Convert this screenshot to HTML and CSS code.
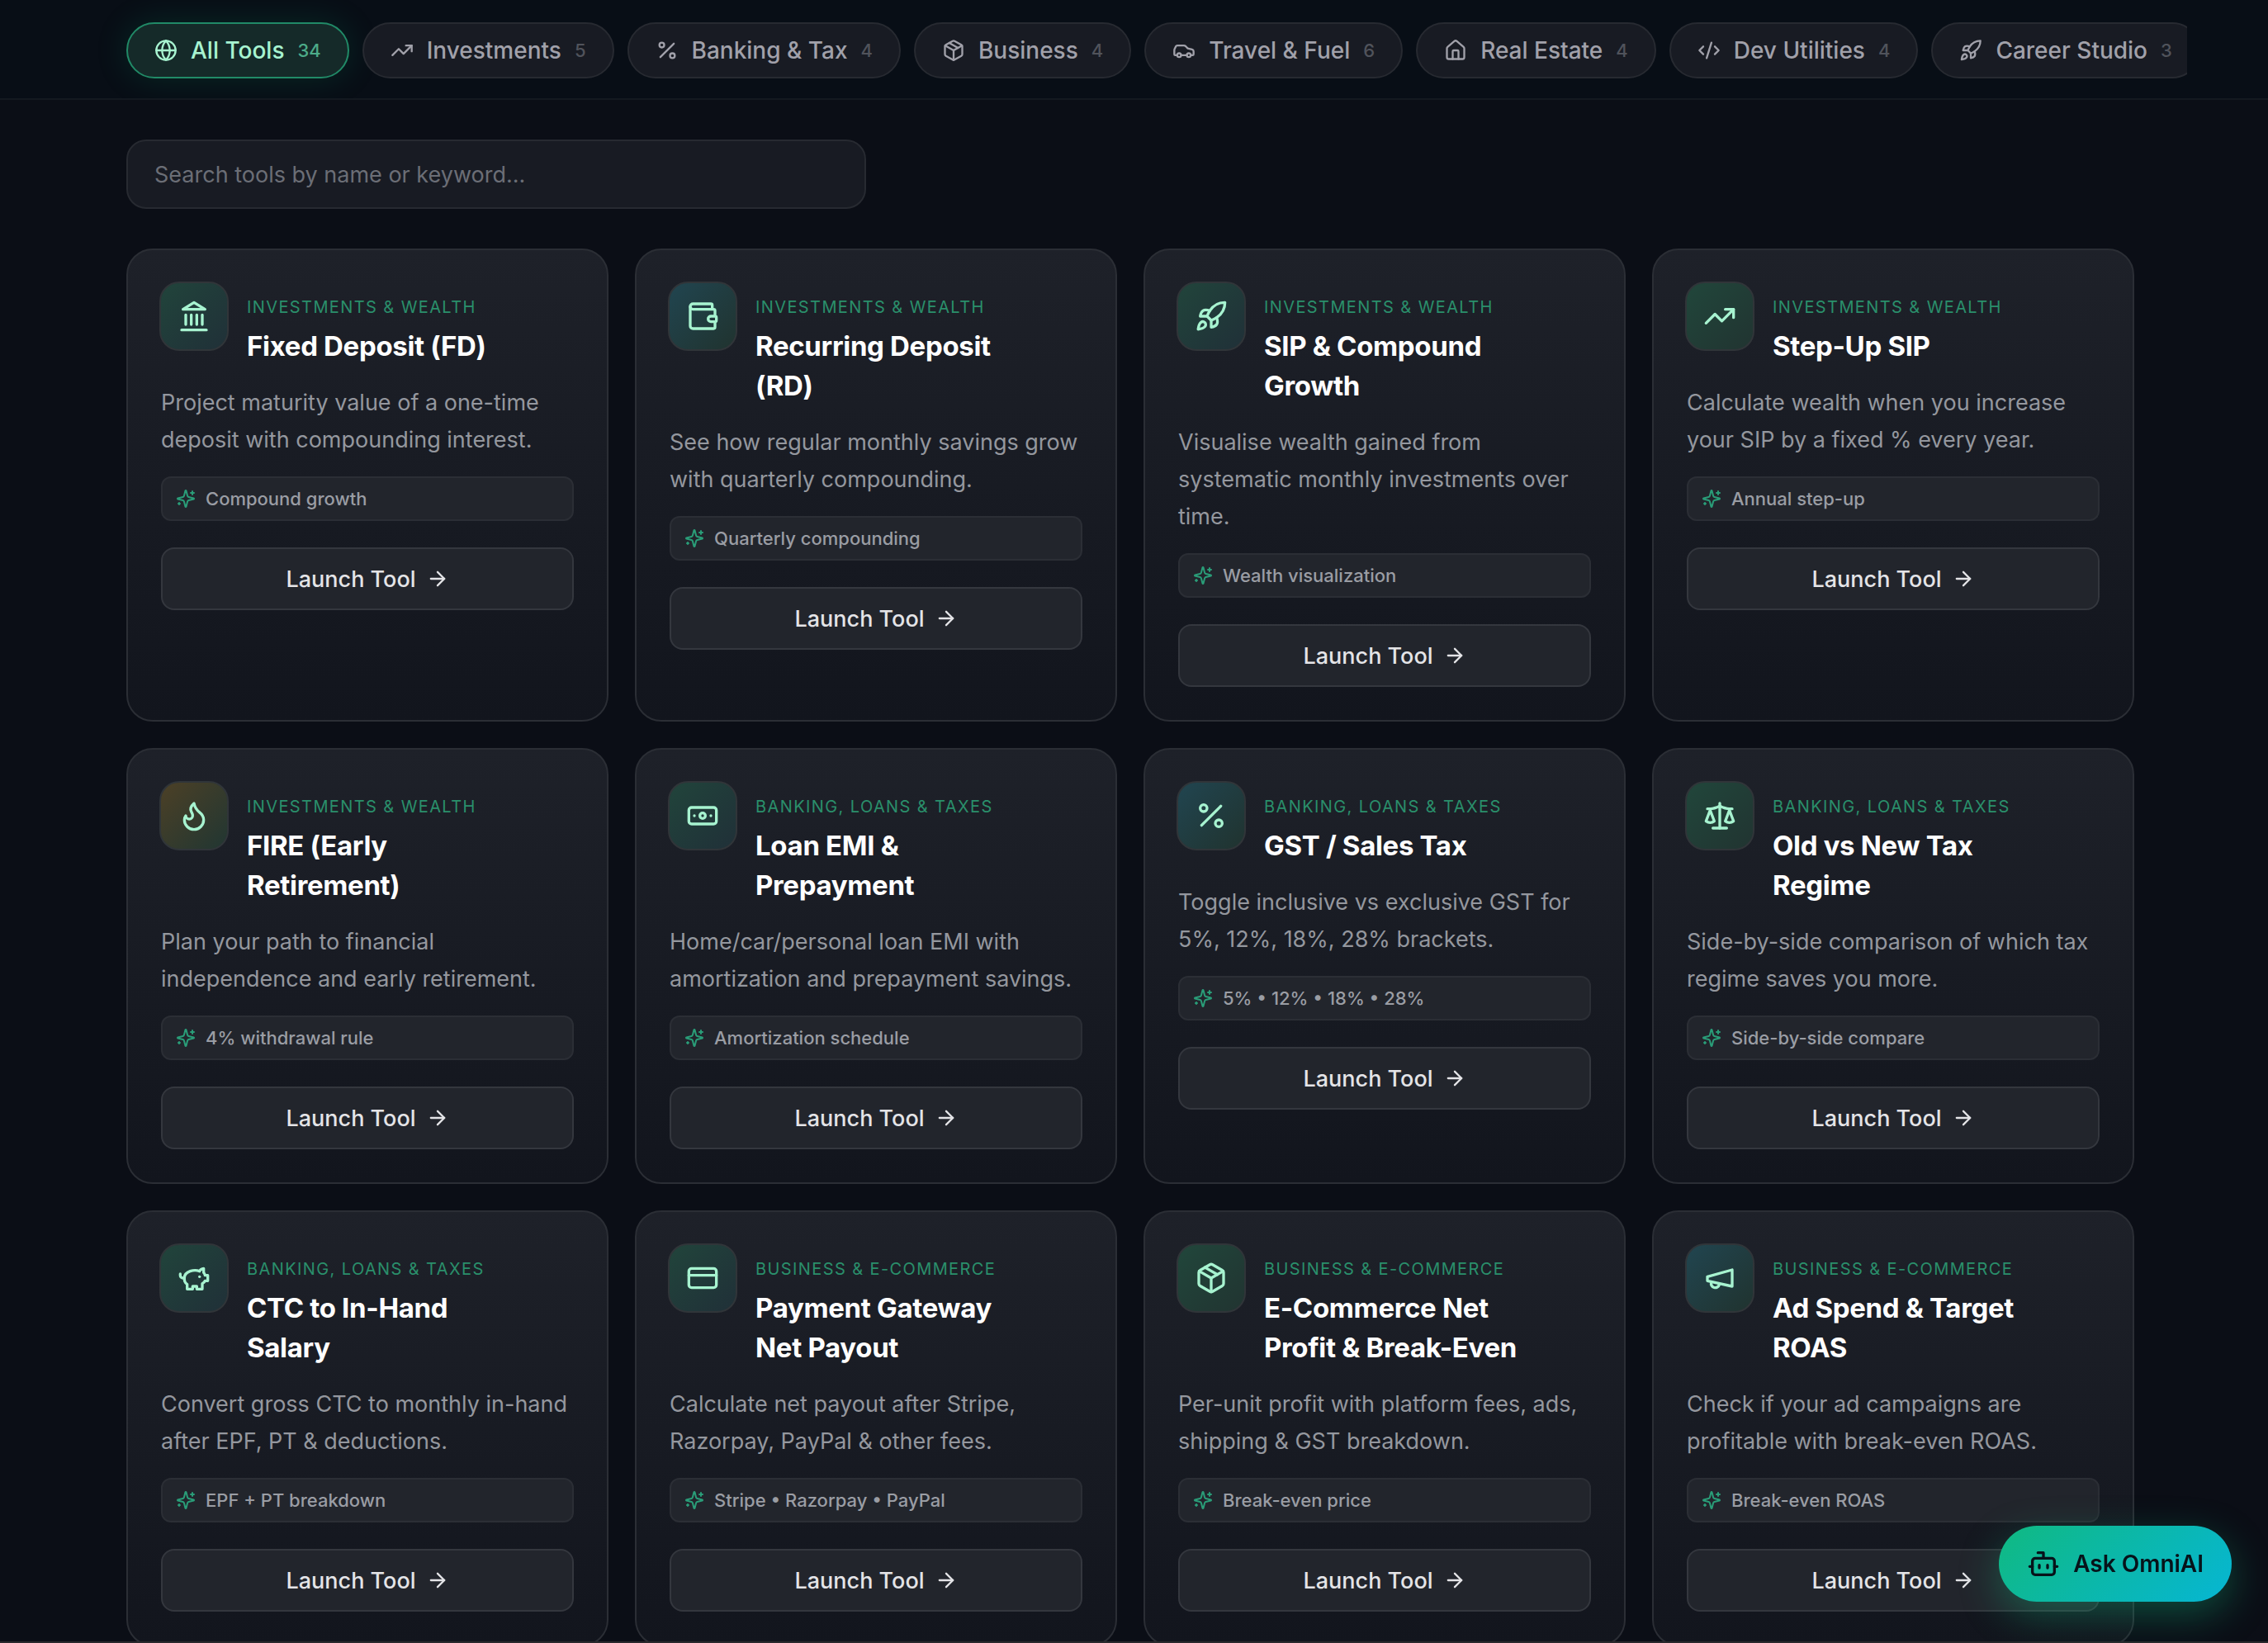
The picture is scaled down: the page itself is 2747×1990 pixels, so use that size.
FILE: index.html
```html
<!DOCTYPE html>
<html lang="en">
<head>
  <meta charset="UTF-8">
  <meta name="viewport" content="width=device-width, initial-scale=1.0">
  <title>OmniTools</title>
  <link rel="stylesheet" href="styles.css">
</head>
<body>
  <!-- icon sprite -->
  <svg class="sprite" aria-hidden="true">
    <symbol id="globe" viewBox="0 0 24 24"><circle cx="12" cy="12" r="10"/><path d="M12 2a14.500 14.500 0 0 0 0 20 14.500 14.500 0 0 0 0-20"/><path d="M2 12h20"/></symbol>
    <symbol id="trend" viewBox="0 0 24 24"><path d="M22 7l-8.500 8.500-5-5L2 17"/><path d="M16 7h6v6"/></symbol>
    <symbol id="percent" viewBox="0 0 24 24"><path d="M19 5 5 19"/><circle cx="6.500" cy="6.500" r="2.500"/><circle cx="17.500" cy="17.500" r="2.500"/></symbol>
    <symbol id="package" viewBox="0 0 24 24"><path d="m7.500 4.270 9 5.150"/><path d="M21 8a2 2 0 0 0-1-1.730l-7-4a2 2 0 0 0-2 0l-7 4A2 2 0 0 0 3 8v8a2 2 0 0 0 1 1.730l7 4a2 2 0 0 0 2 0l7-4A2 2 0 0 0 21 16Z"/><path d="m3.300 7 8.700 5 8.700-5"/><path d="M12 22V12"/></symbol>
    <symbol id="car" viewBox="0 0 24 24"><path d="M19 17h2c.6 0 1-.4 1-1v-3c0-.9-.7-1.700-1.500-1.900C18.700 10.600 16 10 16 10s-1.300-1.400-2.200-2.300c-.5-.4-1.100-.7-1.800-.7H5c-.6 0-1.100.4-1.400.9l-1.400 2.900A3.700 3.700 0 0 0 2 12v4c0 .6.4 1 1 1h2"/><circle cx="7" cy="17" r="2"/><path d="M9 17h6"/><circle cx="17" cy="17" r="2"/></symbol>
    <symbol id="house" viewBox="0 0 24 24"><path d="M15 21v-8a1 1 0 0 0-1-1h-4a1 1 0 0 0-1 1v8"/><path d="M3 10a2 2 0 0 1 .709-1.528l7-5.999a2 2 0 0 1 2.582 0l7 5.999A2 2 0 0 1 21 10v9a2 2 0 0 1-2 2H5a2 2 0 0 1-2-2z"/></symbol>
    <symbol id="code" viewBox="0 0 24 24"><path d="m18 16 4-4-4-4"/><path d="m6 8-4 4 4 4"/><path d="m14.500 4-5 16"/></symbol>
    <symbol id="rocket" viewBox="0 0 24 24"><path d="M4.500 16.500c-1.500 1.260-2 5-2 5s3.740-.5 5-2c.71-.84.7-2.130-.09-2.910a2.180 2.180 0 0 0-2.910-.09z"/><path d="m12 15-3-3a22 22 0 0 1 2-3.950A12.880 12.880 0 0 1 22 2c0 2.720-.78 7.500-6 11a22.350 22.350 0 0 1-4 2z"/><path d="M9 12H4s.55-3.030 2-4c1.620-1.080 5 0 5 0"/><path d="M12 15v5s3.030-.55 4-2c1.080-1.620 0-5 0-5"/></symbol>
    <symbol id="bank" viewBox="0 0 24 24"><path d="M3 22h18M6 18v-7M10 18v-7M14 18v-7M18 18v-7"/><path d="M12 2l8 5H4z"/></symbol>
    <symbol id="wallet" viewBox="0 0 24 24"><path d="M19 7V4a1 1 0 0 0-1-1H5a2 2 0 0 0 0 4h15a1 1 0 0 1 1 1v4h-3a2 2 0 0 0 0 4h3a1 1 0 0 0 1-1v-2a1 1 0 0 0-1-1"/><path d="M3 5v14a2 2 0 0 0 2 2h15a1 1 0 0 0 1-1v-4"/></symbol>
    <symbol id="flame" viewBox="0 0 24 24"><path d="M8.500 14.500A2.500 2.500 0 0 0 11 12c0-1.380-.5-2-1-3-1.072-2.143-.224-4.054 2-6 .5 2.500 2 4.900 4 6.500 2 1.600 3 3.500 3 5.500a7 7 0 1 1-14 0c0-1.153.433-2.294 1-3a2.500 2.500 0 0 0 2.500 2.500z"/></symbol>
    <symbol id="banknote" viewBox="0 0 24 24"><rect x="2" y="6" width="20" height="12" rx="2"/><circle cx="12" cy="12" r="2"/><path d="M6 12h.01M18 12h.01"/></symbol>
    <symbol id="scale" viewBox="0 0 24 24"><path d="m16 16 3-8 3 8c-.87.65-1.920 1-3 1s-2.130-.35-3-1Z"/><path d="m2 16 3-8 3 8c-.87.65-1.920 1-3 1s-2.130-.35-3-1Z"/><path d="M7 21h10"/><path d="M12 3v18"/><path d="M3 7h2c2 0 5-1 7-2 2 1 5 2 7 2h2"/></symbol>
    <symbol id="piggy" viewBox="0 0 24 24"><path d="M19 5c-1.500 0-2.800 1.400-3 2-3.500-1.500-11-.3-11 5 0 1.800 0 3 2 4.500V20h4v-2h3v2h4v-4c1-.5 1.700-1 2-2h2v-4h-2c0-1-.5-1.500-1-2V5z"/><path d="M2 9v1c0 1.100.9 2 2 2h1"/><path d="M16 11h.01"/></symbol>
    <symbol id="card" viewBox="0 0 24 24"><rect x="2" y="5" width="20" height="14" rx="2"/><path d="M2 10h20"/></symbol>
    <symbol id="megaphone" viewBox="0 0 24 24"><path d="m3 11 18-5v12L3 14v-3z"/><path d="M11.600 16.800a3 3 0 1 1-5.800-1.600"/></symbol>
    <symbol id="sparkles" viewBox="0 0 24 24"><path d="M9.937 15.500A2 2 0 0 0 8.500 14.063l-6.135-1.582a.5.5 0 0 1 0-.962L8.500 9.936A2 2 0 0 0 9.937 8.500l1.582-6.135a.5.5 0 0 1 .963 0L14.063 8.500A2 2 0 0 0 15.500 9.937l6.135 1.581a.5.5 0 0 1 0 .964L15.500 14.063a2 2 0 0 0-1.437 1.437l-1.582 6.135a.5.5 0 0 1-.963 0z"/><path d="M20 3v4M22 5h-4M4 17v2M5 18H3"/></symbol>
    <symbol id="arrow" viewBox="0 0 24 24"><path d="M5 12h14"/><path d="m12 5 7 7-7 7"/></symbol>
    <symbol id="bot" viewBox="0 0 24 24"><path d="M12 8V4H8"/><rect x="4" y="8" width="16" height="12" rx="2"/><path d="M2 14h2M20 14h2M15 13v2M9 13v2"/></symbol>
  </svg>

  <header class="topbar">
    <nav class="tabs" aria-label="Categories">
      <button class="tab active"><svg><use href="#globe"/></svg>All Tools<span class="count">34</span></button>
      <button class="tab"><svg><use href="#trend"/></svg>Investments<span class="count">5</span></button>
      <button class="tab"><svg><use href="#percent"/></svg>Banking &amp; Tax<span class="count">4</span></button>
      <button class="tab"><svg><use href="#package"/></svg>Business<span class="count">4</span></button>
      <button class="tab"><svg><use href="#car"/></svg>Travel &amp; Fuel<span class="count">6</span></button>
      <button class="tab"><svg><use href="#house"/></svg>Real Estate<span class="count">4</span></button>
      <button class="tab"><svg><use href="#code"/></svg>Dev Utilities<span class="count">4</span></button>
      <button class="tab"><svg><use href="#rocket"/></svg>Career Studio<span class="count">3</span></button>
    </nav>
  </header>

  <main class="content">
    <input class="search" type="search" aria-label="Search tools" placeholder="Search tools by name or keyword...">

    <div class="grid">
      <article class="tool">
        <div class="head">
          <div class="icon green-blue"><svg><use href="#bank"/></svg></div>
          <div class="titles">
            <p class="category">Investments &amp; Wealth</p>
            <h2>Fixed Deposit (FD)</h2>
          </div>
        </div>
        <p class="desc">Project maturity value of a one-time deposit with compounding interest.</p>
        <div class="chip"><svg><use href="#sparkles"/></svg>Compound growth</div>
        <button class="launch">Launch Tool<svg><use href="#arrow"/></svg></button>
      </article>

      <article class="tool">
        <div class="head">
          <div class="icon cyan"><svg><use href="#wallet"/></svg></div>
          <div class="titles">
            <p class="category">Investments &amp; Wealth</p>
            <h2>Recurring Deposit (RD)</h2>
          </div>
        </div>
        <p class="desc">See how regular monthly savings grow with quarterly compounding.</p>
        <div class="chip"><svg><use href="#sparkles"/></svg>Quarterly compounding</div>
        <button class="launch">Launch Tool<svg><use href="#arrow"/></svg></button>
      </article>

      <article class="tool">
        <div class="head">
          <div class="icon green-blue"><svg><use href="#rocket"/></svg></div>
          <div class="titles">
            <p class="category">Investments &amp; Wealth</p>
            <h2>SIP &amp; Compound Growth</h2>
          </div>
        </div>
        <p class="desc">Visualise wealth gained from systematic monthly investments over time.</p>
        <div class="chip"><svg><use href="#sparkles"/></svg>Wealth visualization</div>
        <button class="launch">Launch Tool<svg><use href="#arrow"/></svg></button>
      </article>

      <article class="tool">
        <div class="head">
          <div class="icon green"><svg><use href="#trend"/></svg></div>
          <div class="titles">
            <p class="category">Investments &amp; Wealth</p>
            <h2>Step-Up SIP</h2>
          </div>
        </div>
        <p class="desc">Calculate wealth when you increase your SIP by a fixed % every year.</p>
        <div class="chip"><svg><use href="#sparkles"/></svg>Annual step-up</div>
        <button class="launch">Launch Tool<svg><use href="#arrow"/></svg></button>
      </article>

      <article class="tool">
        <div class="head">
          <div class="icon amber"><svg><use href="#flame"/></svg></div>
          <div class="titles">
            <p class="category">Investments &amp; Wealth</p>
            <h2>FIRE (Early Retirement)</h2>
          </div>
        </div>
        <p class="desc">Plan your path to financial independence and early retirement.</p>
        <div class="chip"><svg><use href="#sparkles"/></svg>4% withdrawal rule</div>
        <button class="launch">Launch Tool<svg><use href="#arrow"/></svg></button>
      </article>

      <article class="tool">
        <div class="head">
          <div class="icon green-blue"><svg><use href="#banknote"/></svg></div>
          <div class="titles">
            <p class="category">Banking, Loans &amp; Taxes</p>
            <h2>Loan EMI &amp; Prepayment</h2>
          </div>
        </div>
        <p class="desc">Home/car/personal loan EMI with amortization and prepayment savings.</p>
        <div class="chip"><svg><use href="#sparkles"/></svg>Amortization schedule</div>
        <button class="launch">Launch Tool<svg><use href="#arrow"/></svg></button>
      </article>

      <article class="tool">
        <div class="head">
          <div class="icon cyan"><svg><use href="#percent"/></svg></div>
          <div class="titles">
            <p class="category">Banking, Loans &amp; Taxes</p>
            <h2>GST / Sales Tax</h2>
          </div>
        </div>
        <p class="desc">Toggle inclusive vs exclusive GST for 5%, 12%, 18%, 28% brackets.</p>
        <div class="chip"><svg><use href="#sparkles"/></svg>5% • 12% • 18% • 28%</div>
        <button class="launch">Launch Tool<svg><use href="#arrow"/></svg></button>
      </article>

      <article class="tool">
        <div class="head">
          <div class="icon green"><svg><use href="#scale"/></svg></div>
          <div class="titles">
            <p class="category">Banking, Loans &amp; Taxes</p>
            <h2>Old vs New Tax Regime</h2>
          </div>
        </div>
        <p class="desc">Side-by-side comparison of which tax regime saves you more.</p>
        <div class="chip"><svg><use href="#sparkles"/></svg>Side-by-side compare</div>
        <button class="launch">Launch Tool<svg><use href="#arrow"/></svg></button>
      </article>

      <article class="tool">
        <div class="head">
          <div class="icon green-blue"><svg><use href="#piggy"/></svg></div>
          <div class="titles">
            <p class="category">Banking, Loans &amp; Taxes</p>
            <h2>CTC to In-Hand Salary</h2>
          </div>
        </div>
        <p class="desc">Convert gross CTC to monthly in-hand after EPF, PT &amp; deductions.</p>
        <div class="chip"><svg><use href="#sparkles"/></svg>EPF + PT breakdown</div>
        <button class="launch">Launch Tool<svg><use href="#arrow"/></svg></button>
      </article>

      <article class="tool">
        <div class="head">
          <div class="icon green-blue"><svg><use href="#card"/></svg></div>
          <div class="titles">
            <p class="category">Business &amp; E-Commerce</p>
            <h2>Payment Gateway Net Payout</h2>
          </div>
        </div>
        <p class="desc">Calculate net payout after Stripe, Razorpay, PayPal &amp; other fees.</p>
        <div class="chip"><svg><use href="#sparkles"/></svg>Stripe • Razorpay • PayPal</div>
        <button class="launch">Launch Tool<svg><use href="#arrow"/></svg></button>
      </article>

      <article class="tool">
        <div class="head">
          <div class="icon green"><svg><use href="#package"/></svg></div>
          <div class="titles">
            <p class="category">Business &amp; E-Commerce</p>
            <h2>E-Commerce Net Profit &amp; Break-Even</h2>
          </div>
        </div>
        <p class="desc">Per-unit profit with platform fees, ads, shipping &amp; GST breakdown.</p>
        <div class="chip"><svg><use href="#sparkles"/></svg>Break-even price</div>
        <button class="launch">Launch Tool<svg><use href="#arrow"/></svg></button>
      </article>

      <article class="tool">
        <div class="head">
          <div class="icon cyan"><svg><use href="#megaphone"/></svg></div>
          <div class="titles">
            <p class="category">Business &amp; E-Commerce</p>
            <h2>Ad Spend &amp; Target ROAS</h2>
          </div>
        </div>
        <p class="desc">Check if your ad campaigns are profitable with break-even ROAS.</p>
        <div class="chip"><svg><use href="#sparkles"/></svg>Break-even ROAS</div>
        <button class="launch">Launch Tool<svg><use href="#arrow"/></svg></button>
      </article>
    </div>
  </main>

  <button class="ask"><svg><use href="#bot"/></svg>Ask OmniAI</button>
</body>
</html>
```
FILE: styles.css
```css
* {
  box-sizing: border-box;
  margin: 0;
}
body {
  height: 100vh;
  overflow: hidden;
  padding-right: 9px;
  border-bottom: 2px solid #29282c;
  background: #0b0e16;
  color: #e4e4e7;
  font-family: Inter, "Liberation Sans", sans-serif;
  font-size: 27px;
}
button {
  font: inherit;
  cursor: pointer;
}
svg {
  flex: none;
  fill: none;
  stroke: currentColor;
  stroke-width: 2;
  stroke-linecap: round;
  stroke-linejoin: round;
}
.sprite {
  display: none;
}

/* category bar */
.topbar {
  margin-right: -9px;
  padding-right: 9px;
  background: #080e16;
  border-bottom: 2px solid #131920;
}
.tabs {
  display: flex;
  gap: 16px;
  max-width: 2560px;
  margin: 0 auto;
  padding: 27px 0 24px 64px;
  overflow: hidden;
}
.tab {
  display: flex;
  flex: none;
  align-items: center;
  gap: 16px;
  height: 68px;
  padding: 0 32px;
  border: 2px solid #272a31;
  border-radius: 34px;
  background: #181b23;
  color: #a1a1aa;
  font-size: 28px;
  font-weight: 500;
}
.tab svg {
  width: 28px;
  height: 28px;
}
.count {
  color: #50535b;
  font-size: 22px;
}
.tab.active {
  border-color: #218a67;
  background: #152a29;
  color: #a7f3d0;
  box-shadow: 0 0 40px rgba(16, 185, 129, 0.15);
}
.active .count {
  color: #4cab88;
}

.content {
  max-width: 2560px;
  margin: 0 auto;
  padding: 48px 64px;
}
.search {
  display: block;
  width: 100%;
  max-width: 896px;
  height: 84px;
  margin-bottom: 48px;
  padding: 0 32px;
  border: 2px solid #272a31;
  border-radius: 24px;
  background: #181b23;
  color: #e4e4e7;
  font: inherit;
}
.search::placeholder {
  color: #6b6e76;
}

/* tool cards */
.grid {
  display: grid;
  grid-template-columns: repeat(4, 1fr);
  gap: 32px;
}
.tool {
  padding: 40px;
  border: 2px solid #2b2e35;
  border-radius: 32px;
  background: linear-gradient(#1e2129, #12151d);
}
.head {
  display: flex;
  align-items: flex-start;
  gap: 22px;
  margin-bottom: 22px;
}
.icon {
  display: flex;
  flex: none;
  align-items: center;
  justify-content: center;
  width: 84px;
  height: 84px;
  margin: -2px 0 -2px -2px;
  border: 2px solid #303539;
  border-radius: 24px;
  color: #a7f3d0;
}
.icon svg {
  width: 40px;
  height: 40px;
}
.green-blue { background: linear-gradient(135deg, #21443b, #203038); }
.green { background: linear-gradient(135deg, #21463b, #213431); }
.cyan { background: linear-gradient(135deg, #214550, #20332f); }
.amber { background: linear-gradient(135deg, #4c4026, #213632); }
.titles {
  padding-top: 13px;
}
.category {
  margin-bottom: 7px;
  color: #2a8f6b;
  font-size: 20px;
  line-height: 32px;
  letter-spacing: 0.07em;
  text-transform: uppercase;
}
h2 {
  color: #fff;
  font-size: 33px;
  font-weight: 700;
  line-height: 48px;
  letter-spacing: -0.01em;
  max-width: 320px;
}
.desc {
  margin-bottom: 22px;
  color: #94979e;
  line-height: 45px;
}
.chip {
  display: flex;
  align-items: center;
  gap: 12px;
  height: 54px;
  margin-bottom: 32px;
  padding: 0 16px;
  border: 2px solid #2b2e35;
  border-radius: 12px;
  background: #22252c;
  color: #9a9da4;
  font-size: 22px;
  font-weight: 500;
}
.chip svg {
  width: 24px;
  height: 24px;
  color: #2a9d78;
}
.launch {
  display: flex;
  align-items: center;
  justify-content: center;
  gap: 12px;
  width: 100%;
  height: 76px;
  border: 2px solid #34373e;
  border-radius: 16px;
  background: #22252c;
  color: #e4e4e7;
  font-weight: 500;
}
.launch svg {
  width: 28px;
  height: 28px;
}

/* floating assistant button */
.ask {
  position: fixed;
  right: 44px;
  bottom: 50px;
  display: flex;
  align-items: center;
  gap: 16px;
  height: 92px;
  padding: 0 34px;
  border: none;
  border-radius: 46px;
  background: linear-gradient(135deg, #10b981, #06b6d4);
  color: #07131a;
  font-size: 28px;
  font-weight: 600;
  box-shadow: 0 16px 48px rgba(16, 185, 129, 0.35);
}
.ask svg {
  width: 40px;
  height: 40px;
}
```
